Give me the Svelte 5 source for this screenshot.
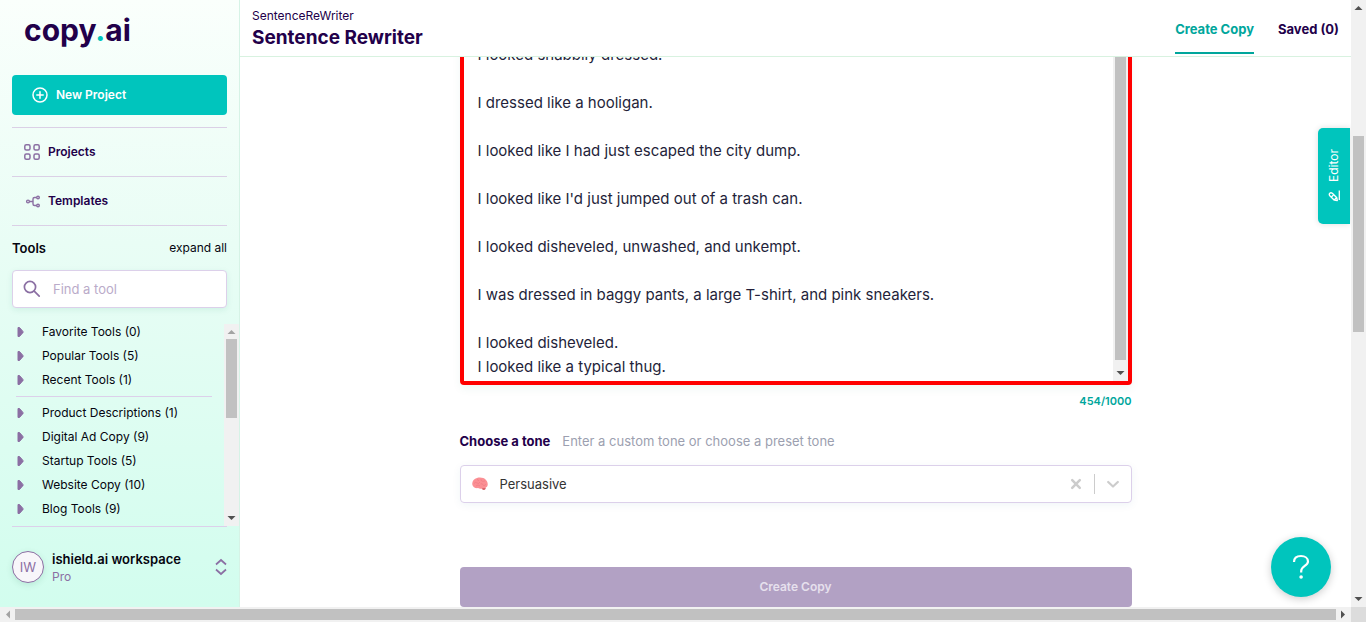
<script>
  const pinned = ['Favorite Tools (0)', 'Popular Tools (5)', 'Recent Tools (1)'];
  const categories = [
    'Product Descriptions (1)',
    'Digital Ad Copy (9)',
    'Startup Tools (5)',
    'Website Copy (10)',
    'Blog Tools (9)'
  ];
  let search = $state('');
  let tone = $state('Persuasive');
  let copy = $state(
    [
      'I looked shabbily dressed.',
      'I dressed like a hooligan.',
      'I looked like I had just escaped the city dump.',
      "I looked like I'd just jumped out of a trash can.",
      'I looked disheveled, unwashed, and unkempt.',
      'I was dressed in baggy pants, a large T-shirt, and pink sneakers.',
      'I looked disheveled.\nI looked like a typical thug.'
    ].join('\n\n')
  );
</script>

{#snippet scrollbar(dir, start, size, atStart)}
  <div class="bar {dir}" aria-hidden="true">
    <svg class:off={atStart} viewBox="0 0 15 15"><path d="M3.5 10h8l-4-4z" /></svg>
    <div class="track">
      <div style="flex: {start} 0 0"></div>
      <div class="thumb" style="flex: {size} 0 0"></div>
      <div style="flex: {100 - start - size} 0 0"></div>
    </div>
    <svg viewBox="0 0 15 15"><path d="M3.5 5h8l-4 4z" /></svg>
  </div>
{/snippet}

{#snippet toolRow(name)}
  <li>
    <button class="tool">
      <svg width="8" height="10" viewBox="0 0 8 10"><path d="M1 .5h1.5L6 4.500v1L2.500 9.500H1z" fill="#8b6fa3" stroke="#8b6fa3" stroke-linejoin="round" /></svg>
      {name}
    </button>
  </li>
{/snippet}

<div class="window">
  <div class="page">
    <aside>
      <a class="logo" href="#home">copy<span>.</span>ai</a>
      <button class="new">
        <svg width="16" height="16" viewBox="0 0 16 16" fill="none" stroke="#fff" stroke-width="1.5" stroke-linecap="round"><circle cx="8" cy="8" r="7" /><path d="M8 4.800v6.400M4.800 8h6.400" /></svg>
        New Project
      </button>
      <nav>
        <a href="#projects">
          <svg width="16" height="16" viewBox="0 0 16 16" fill="none" stroke="#8b6fa3" stroke-width="1.500"><rect x=".8" y=".8" width="5.200" height="5.200" rx="1.500" /><rect x="10" y=".8" width="5.200" height="5.200" rx="1.500" /><rect x=".8" y="10" width="5.200" height="5.200" rx="1.500" /><rect x="10" y="10" width="5.200" height="5.200" rx="1.500" /></svg>
          Projects
        </a>
        <a href="#templates">
          <svg width="16" height="16" viewBox="0 0 16 16" fill="none" stroke="#8b6fa3" stroke-width="1.400"><circle cx="4" cy="8.500" r="1.400" /><circle cx="14" cy="4.500" r="1.300" /><circle cx="14" cy="12.500" r="1.300" /><path d="M5.400 8.500H9M12.600 4.500h-2Q9 4.500 9 6v5q0 1.500 1.600 1.500h2" /></svg>
          Templates
        </a>
      </nav>
      <div class="tools-head">
        <h2>Tools</h2>
        <button>expand all</button>
      </div>
      <label class="search">
        <svg width="18" height="18" viewBox="0 0 18 18" fill="none" stroke="#8b6fa3" stroke-width="1.700" stroke-linecap="round"><circle cx="7" cy="7" r="5.600" /><path d="M11.200 11.200l5 5" /></svg>
        <input type="text" placeholder="Find a tool" aria-label="Find a tool" bind:value={search} />
      </label>
      <div class="list">
        <ul>
          {#each pinned as name}{@render toolRow(name)}{/each}
          <li class="rule"></li>
          {#each categories as name}{@render toolRow(name)}{/each}
        </ul>
        {@render scrollbar('v', 0, 46, true)}
      </div>
      <button class="account">
        <span class="avatar">IW</span>
        <span class="who"><strong>ishield.ai workspace</strong><small>Pro</small></span>
        <svg width="12" height="18" viewBox="0 0 12 18" fill="none" stroke="#8b6fa3" stroke-width="1.700"><path d="M1 6.500l5-4.500 5 4.500M1 11.500l5 4.500 5-4.500" /></svg>
      </button>
    </aside>

    <section class="content">
      <header>
        <div class="title">
          <p>SentenceReWriter</p>
          <h1>Sentence Rewriter</h1>
        </div>
        <nav class="tabs">
          <a class="active" href="#create">Create Copy</a>
          <a href="#saved">Saved (0)</a>
        </nav>
      </header>
      <main>
        <form onsubmit={(e) => e.preventDefault()}>
          <div class="area">
            <textarea rows="14" aria-label="Sentence" bind:value={copy}></textarea>
            {@render scrollbar('v', 0, 98, false)}
          </div>
          <p class="count">454/1000</p>
          <div class="tone-head">
            <label for="tone">Choose a tone</label>
            <span>Enter a custom tone or choose a preset tone</span>
          </div>
          <div class="tone">
            <svg width="16" height="14" viewBox="0 0 16 14">
              <path d="M10 10.500l3-.5c1.500 1 .5 3-1.500 3-1 0-2-1.500-1.500-2.500z" fill="#d9646d" />
              <path d="M.3 7.500C-.2 4.500 2 1.500 5 .9c3-.8 7-.4 9 2 1.700 1.800 2.200 4.500 1.300 6.300-.8 1.500-2.500 1.800-4.300 1.700-1.500 1.300-3.500 1-5 .2C3.500 11.500.6 10 .3 7.500z" fill="#fb8f94" />
              <path d="M2 6.500q1.500-2 3-.5t3-1M5 2.500q1.500 0 1.500 1.500M9 2.200q-.5 1.500 1.500 2t2.500-.7M4 9q2-2 4 0M8.500 7q2-1 2.500 1t3-.8" fill="none" stroke="#ec7981" stroke-width=".6" />
            </svg>
            <select id="tone" bind:value={tone}>
              <option>Persuasive</option>
            </select>
            <button type="button" aria-label="Clear tone">
              <svg width="12" height="12" viewBox="0 0 12 12" fill="none" stroke="#ccc" stroke-width="2.500" stroke-linecap="round"><path d="M2.200 2.200l7.600 7.600M9.800 2.200L2.200 9.800" /></svg>
            </button>
            <i></i>
            <svg width="12" height="14" viewBox="0 0 12 14" fill="none" stroke="#ccc" stroke-width="2.200" stroke-linecap="round" stroke-linejoin="round"><path d="M1.200 5L6 9.500 10.800 5" /></svg>
          </div>
          <button class="submit" disabled>Create Copy</button>
        </form>
      </main>
    </section>

    <button class="editor">
      <svg width="12" height="12" viewBox="0 0 12 12" fill="none" stroke="#fff" stroke-width="1.300" stroke-linejoin="round"><path d="M2 11.300h9.500M1.500 9.300l.3-3L6.200 1.800q1.300-1.100 2.500 0t0 2.500L4.300 8.800zM4.800 3.200l2.600 2.500M2 6.200l2.500 2.500" /></svg>
      Editor
    </button>
    <button class="help" aria-label="Help">
      <svg width="18" height="26" viewBox="0 0 18 26" fill="none" stroke="#fff" stroke-width="2.200"><path d="M2 8C2 4 5 2 9 2s7 2.200 7 5.500c0 4.500-6.800 4.500-6.800 9.500v1.500" /><circle cx="9.100" cy="23" r="1.800" fill="#fff" stroke="none" /></svg>
    </button>
  </div>
  {@render scrollbar('v', 21, 34, false)}
  {@render scrollbar('h', 0, 100, true)}
  <div class="corner"></div>
</div>

<style>
  :global(body) {
    margin: 0;
  }
  .window,
  .window * {
    box-sizing: border-box;
  }
  .window {
    display: grid;
    grid-template-columns: minmax(0, 1fr) 15px;
    grid-template-rows: minmax(0, 1fr) 15px;
    height: 100vh;
    font-family: Inter, 'Liberation Sans', sans-serif;
    font-size: 12px;
    line-height: 16px;
    color: #05050f;
  }
  .page {
    position: relative;
    display: flex;
    overflow: hidden;
    background: #fff;
  }
  button,
  input,
  select,
  textarea {
    font: inherit;
    color: inherit;
    border: 0;
    padding: 0;
    margin: 0;
    background: none;
    outline: none;
  }
  button {
    cursor: pointer;
  }
  a {
    color: inherit;
    text-decoration: none;
  }
  h1,
  h2,
  p,
  ul {
    margin: 0;
    padding: 0;
    list-style: none;
  }
  svg {
    flex: none;
    display: block;
  }

  .bar {
    display: flex;
    flex: none;
    background: #f1f1f1;
  }
  .bar svg {
    width: 15px;
    height: 15px;
    fill: #505050;
  }
  .bar svg.off {
    fill: #a3a3a3;
  }
  .bar.v {
    flex-direction: column;
    width: 15px;
  }
  .track {
    display: flex;
    flex: 1;
  }
  .v .track {
    flex-direction: column;
    padding: 0 2px;
  }
  .h .track {
    padding: 2px 0;
  }
  .h svg {
    transform: rotate(-90deg);
  }
  .thumb {
    background: #c1c1c1;
  }
  .corner {
    background: #dcdcdc;
  }

  aside {
    flex: none;
    display: flex;
    flex-direction: column;
    width: 240px;
    padding: 0 12px;
    border-right: 1px solid #d6f3e6;
    background: linear-gradient(#fafffc, #e9fdf5 40%, #d2fdee);
  }
  .logo {
    height: 75px;
    padding: 11px 12px 0;
    font-size: 30px;
    line-height: 38px;
    font-weight: 700;
    color: #22004a;
  }
  .logo span {
    color: #00c5bc;
  }
  .new {
    display: flex;
    align-items: center;
    gap: 8px;
    height: 40px;
    flex: none;
    padding: 0 20px;
    border-radius: 4px;
    background: #00c5bd;
    color: #fff;
    font-weight: 600;
  }
  aside nav {
    margin-top: 12px;
    border-top: 1px solid #dbd0e6;
  }
  aside nav a {
    display: flex;
    align-items: center;
    gap: 8px;
    height: 49px;
    padding: 0 12px;
    border-bottom: 1px solid #dbd0e6;
    color: #22004a;
    font-weight: 600;
  }
  .tools-head {
    display: flex;
    align-items: center;
    justify-content: space-between;
    height: 44px;
  }
  h2 {
    font-size: 13px;
    font-weight: 600;
  }
  .search {
    display: flex;
    align-items: center;
    gap: 12px;
    flex: none;
    height: 38px;
    padding: 0 10px;
    border: 1px solid #dcd0ea;
    border-radius: 4px;
    background: #fff;
    box-shadow: 0 2px 6px #00806018;
    font-size: 13px;
  }
  .search input {
    flex: 1;
    min-width: 0;
  }
  .search input::placeholder {
    color: #baabc9;
    opacity: 1;
  }
  .list {
    display: flex;
    flex: 1 1 0;
    min-height: 0;
    margin: 16px -12px 0 0;
  }
  .list ul {
    flex: 1;
    overflow: hidden;
    padding: 0 12px 0 4px;
  }
  .tool {
    display: flex;
    align-items: center;
    gap: 17px;
    margin-bottom: 8px;
    padding-left: 1px;
    white-space: nowrap;
  }
  .rule {
    border-top: 1px solid #dcd0ea;
    margin-bottom: 8px;
  }
  .account {
    display: flex;
    align-items: center;
    gap: 8px;
    flex: none;
    height: 81px;
    border-top: 1px solid #dcd0ea;
    text-align: left;
  }
  .avatar {
    width: 32px;
    height: 32px;
    border: 1px solid #8b6fa3;
    border-radius: 50%;
    background: #f8f6fa;
    box-shadow: 0 2px 6px #00604020;
    color: #8b6fa3;
    font-size: 13px;
    line-height: 31px;
    text-align: center;
  }
  .who {
    flex: 1;
  }
  .who strong {
    display: block;
    font-size: 13px;
    line-height: 20px;
    font-weight: 600;
  }
  .who small {
    font-size: 12px;
    color: #8b6fa3;
  }

  .content {
    display: flex;
    flex: 1;
    min-width: 0;
    flex-direction: column;
  }
  header {
    display: flex;
    justify-content: space-between;
    flex: none;
    height: 57px;
    padding: 0 12px;
    border-bottom: 1px solid #d8f2e0;
    color: #22004a;
  }
  .title {
    padding-top: 8px;
  }
  h1 {
    font-size: 19px;
    line-height: 28px;
    font-weight: 700;
  }
  .tabs {
    display: flex;
    gap: 24px;
    font-size: 13px;
    line-height: 16px;
    font-weight: 700;
  }
  .tabs a {
    height: 54px;
    padding-top: 21px;
    border-bottom: 2px solid transparent;
  }
  .tabs .active {
    color: #00a69c;
    border-color: #00a69c;
  }
  main {
    display: flex;
    flex: 1;
    min-height: 0;
    flex-direction: column;
    justify-content: flex-end;
    align-items: center;
    overflow: hidden;
  }
  form {
    width: 100%;
    max-width: 672px;
  }
  .area {
    display: flex;
    border: 4px solid #f00;
    border-radius: 4px;
    box-shadow: 0 4px 8px #00806010;
  }
  textarea {
    display: block;
    flex: 1;
    min-width: 0;
    padding: 12px 14px 2px;
    overflow: hidden;
    resize: none;
    font-size: 15px;
    line-height: 24px;
    color: #241f3a;
  }
  .count {
    margin-top: 8px;
    text-align: right;
    font-size: 11px;
    font-weight: 600;
    color: #00a69c;
  }
  .tone-head {
    display: flex;
    gap: 12px;
    margin: 20px 0 12px;
    font-size: 13px;
    line-height: 24px;
    color: #9c9fb0;
  }
  .tone-head label {
    color: #22004a;
    font-weight: 700;
  }
  .tone {
    display: flex;
    align-items: center;
    height: 38px;
    padding: 0 12px 0 11px;
    border: 1px solid #dcd0ea;
    border-radius: 4px;
    box-shadow: 0 2px 8px #00608010;
    font-size: 13px;
    color: #333;
  }
  select {
    flex: 1;
    height: 36px;
    margin-left: 12px;
    appearance: none;
  }
  .tone i {
    width: 1px;
    height: 20px;
    margin: 0 12px;
    background: #ccc;
  }
  .submit {
    display: block;
    width: 100%;
    height: 40px;
    margin-top: 64px;
    border-radius: 4px;
    background: #b2a1c4;
    color: #e6e0ed;
    font-weight: 600;
  }
  .editor {
    position: absolute;
    top: 128px;
    right: 1px;
    display: flex;
    align-items: center;
    justify-content: center;
    gap: 8px;
    width: 32px;
    height: 96px;
    writing-mode: vertical-rl;
    transform: rotate(180deg);
    border-radius: 0 5px 5px 0;
    background: #00c5bd;
    box-shadow: 0 0 6px #0002;
    color: #fff;
  }
  .editor svg {
    transform: rotate(90deg);
  }
  .help {
    position: absolute;
    right: 20px;
    bottom: 10px;
    display: grid;
    place-items: center;
    width: 60px;
    height: 60px;
    border-radius: 50%;
    background: #00c5bd;
    box-shadow: 0 2px 8px #0003;
  }
</style>
